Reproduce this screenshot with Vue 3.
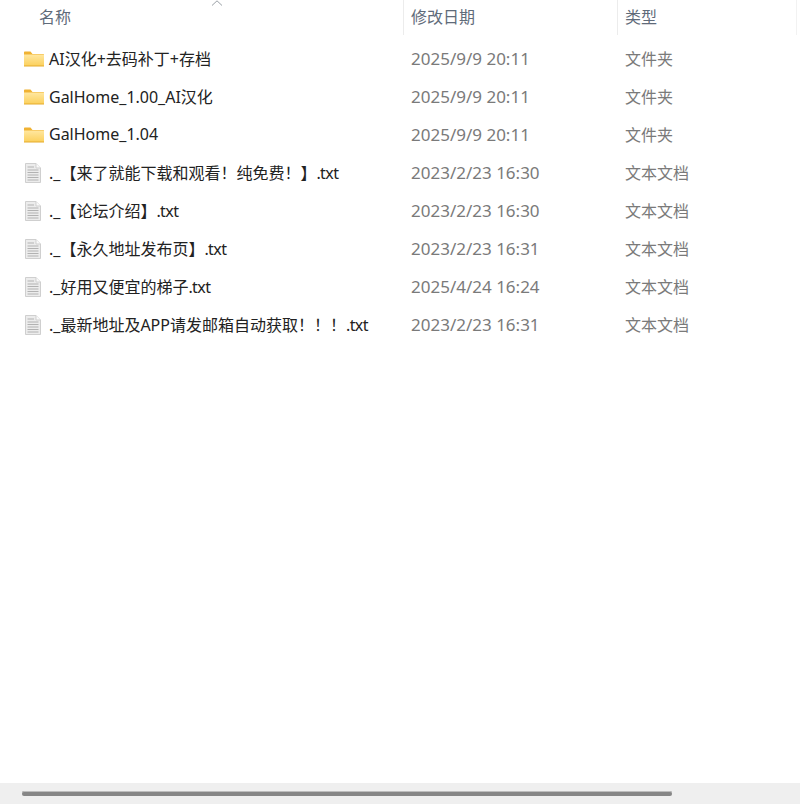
<script setup>
const rows = [
  { name: 'AI汉化+去码补丁+存档', date: '2025/9/9 20:11', type: '文件夹', folder: true },
  { name: 'GalHome_1.00_AI汉化', date: '2025/9/9 20:11', type: '文件夹', folder: true },
  { name: 'GalHome_1.04', date: '2025/9/9 20:11', type: '文件夹', folder: true },
  { name: '._【来了就能下载和观看！纯免费！】', ext: '.txt', date: '2023/2/23 16:30', type: '文本文档' },
  { name: '._【论坛介绍】', ext: '.txt', date: '2023/2/23 16:30', type: '文本文档' },
  { name: '._【永久地址发布页】', ext: '.txt', date: '2023/2/23 16:31', type: '文本文档' },
  { name: '._好用又便宜的梯子', ext: '.txt', date: '2025/4/24 16:24', type: '文本文档' },
  { name: '._最新地址及APP请发邮箱自动获取！！！', ext: '.txt', date: '2023/2/23 16:31', type: '文本文档' },
]
</script>

<template>
  <div class="explorer">
    <div class="header">
      <div class="hcell name-col">
        <span>名称</span>
        <svg class="sort" width="12" height="6" viewBox="0 0 12 6"><path d="M1 5.500 6 .8l5 4.700" fill="none" stroke="#9aa0a6" stroke-width="1"/></svg>
      </div>
      <div class="hcell date-col">修改日期</div>
      <div class="hcell type-col">类型</div>
    </div>
    <div class="list">
      <div v-for="r in rows" :key="r.name" class="row">
        <div class="cell name-col main">
          <svg v-if="r.folder" class="icon" width="20" height="16" viewBox="0 0 20 16">
            <defs>
              <linearGradient id="fg" x1="0" y1="0" x2="0" y2="1">
                <stop offset="0" stop-color="#ffe7a0"/>
                <stop offset="1" stop-color="#fbd05c"/>
              </linearGradient>
            </defs>
            <path d="M0 1.500C0 .9.4.5 1 .5h5.500l2 2.500H19.500c.3 0 .5.2.500.5V5H0z" fill="#f0b232"/>
            <rect x="0" y="3.500" width="20" height="11.500" fill="url(#fg)"/>
            <rect x="0" y="14.500" width="20" height="1" fill="#e5ab2c"/>
          </svg>
          <svg v-else class="icon" width="20" height="20" viewBox="0 0 20 20">
            <path d="M1.500 .5h10.500l4.500 4.500V19.500H1.500z" fill="#ececec" stroke="#cfcfcf"/>
            <path d="M12 .5V5h4.500" fill="#fafafa" stroke="#cfcfcf"/>
            <path d="M3.500 4h6.500M3.500 7h11M3.500 9.500h11M3.500 12h11M3.500 14.500h11M3.500 17h11" stroke="#b2b2b2" stroke-width="1.100"/>
          </svg>
          <span class="label">{{ r.name }}<span v-if="r.ext" class="ext">{{ r.ext }}</span></span>
        </div>
        <div class="cell date-col sub date">{{ r.date }}</div>
        <div class="cell type-col sub label">{{ r.type }}</div>
      </div>
    </div>
    <div class="scroll">
      <div class="thumb"></div>
    </div>
  </div>
</template>

<style scoped>
.explorer {
  width: 800px;
  height: 804px;
  display: flex;
  flex-direction: column;
  background: #fff;
  font-family: "Noto Sans", "Noto Sans CJK SC", sans-serif;
  font-size: 16px;
  overflow: hidden;
}
.header {
  display: flex;
  height: 35px;
  flex: none;
  margin-bottom: 5px;
  color: #5f6b7a;
}
.hcell {
  display: flex;
  align-items: center;
  box-sizing: border-box;
  height: 35px;
  padding-bottom: 4px;
  position: relative;
}
.name-col { width: 403px; flex: none; box-sizing: border-box; }
.date-col { width: 214px; flex: none; box-sizing: border-box; padding-left: 8px; }
.type-col { width: 180px; flex: none; box-sizing: border-box; padding-left: 8px; }
.hcell.name-col { padding-left: 39px; }
.hcell.date-col, .hcell.type-col { border-left: 1px solid #ececec; padding-left: 7px; }
.hcell.type-col { border-right: 1px solid #f2f2f2; }
.sort { position: absolute; left: 211px; top: 0; }
.list { flex: 1; }
.row { display: flex; height: 38px; align-items: center; }
.cell { display: flex; align-items: center; white-space: nowrap; }
.main { color: #222; padding-left: 24px; gap: 5px; }
.label { padding-bottom: 2px; }
.ext { letter-spacing: -0.6px; }
.icon { flex: none; }
.sub { color: #7a7a7a; }
.date { font-size: 17px; padding-bottom: 2px; }
.scroll {
  height: 21px;
  flex: none;
  background: #efefef;
  display: flex;
  align-items: flex-start;
  padding: 8px 0 0 22px;
  box-sizing: border-box;
}
.thumb {
  width: 650px;
  height: 5px;
  border-radius: 2px;
  background: #868686;
  box-shadow: inset 0 1px 0 #bdbdbd;
}
</style>
